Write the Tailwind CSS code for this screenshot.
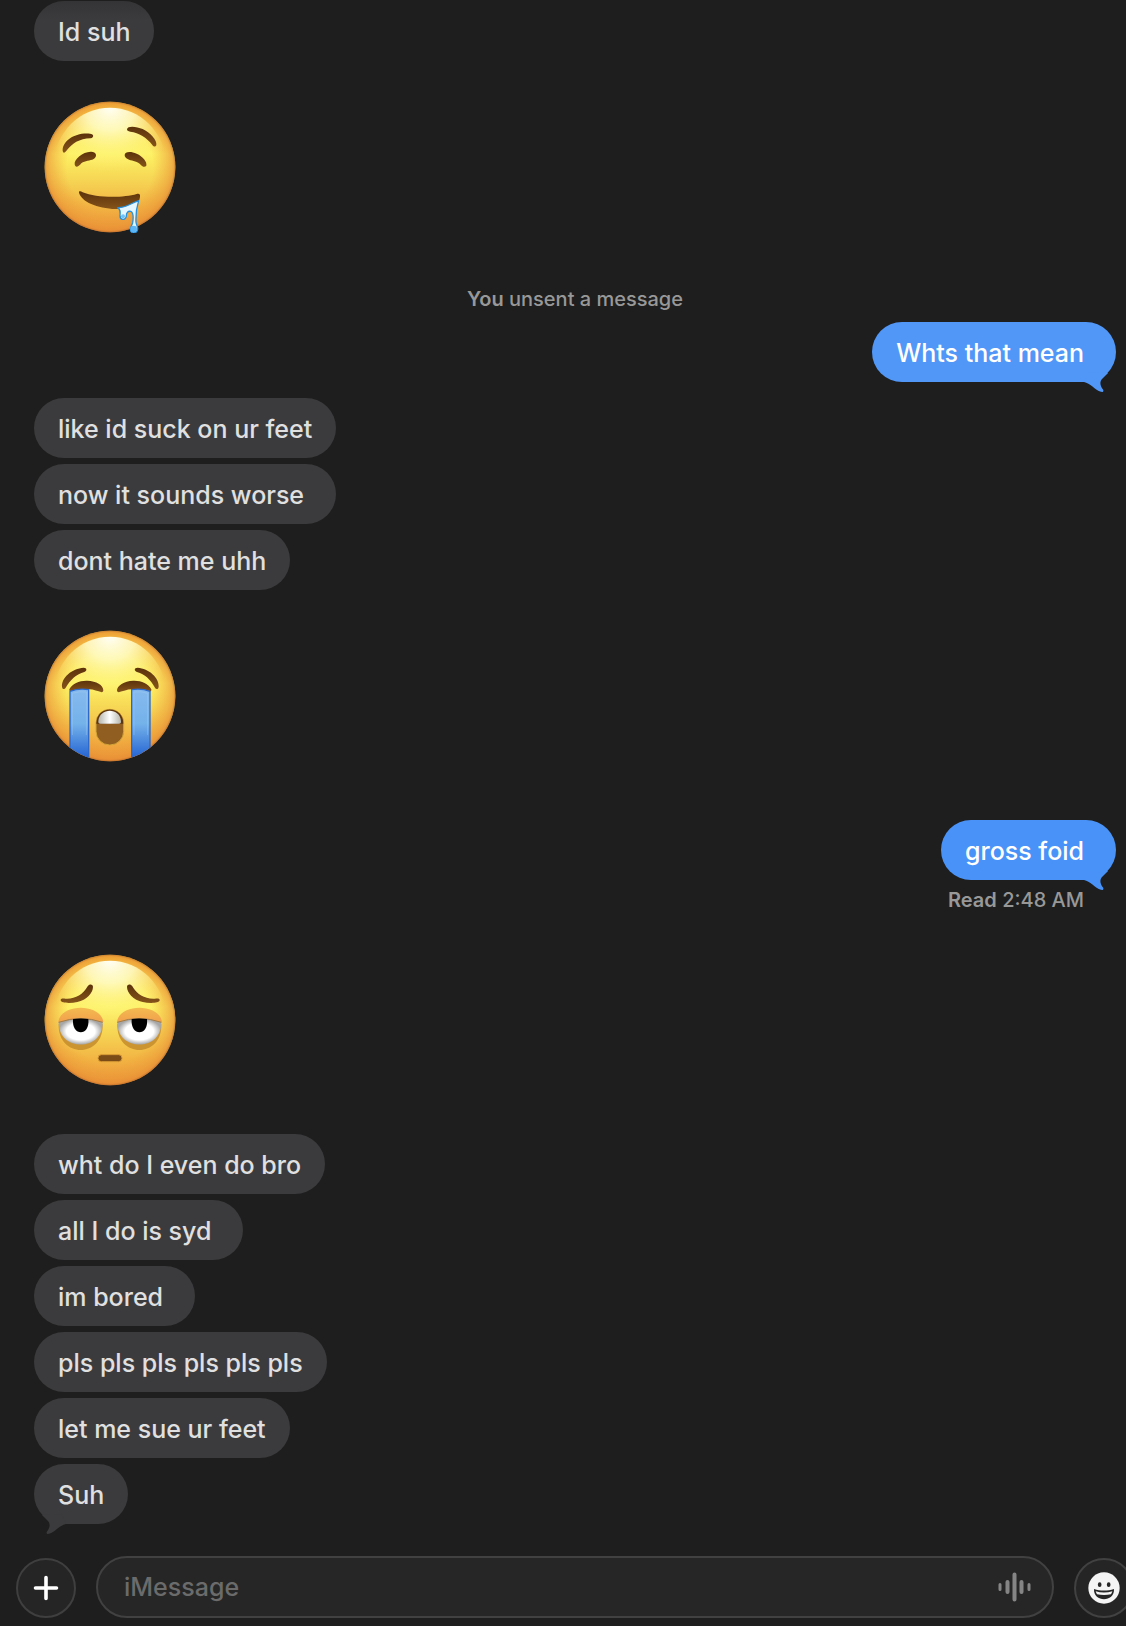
<!DOCTYPE html>
<html lang="en">

<head>
    <meta charset="UTF-8">
    <meta name="viewport" content="width=device-width, initial-scale=1.0">
    <title>Messages</title>
    <script src="https://cdn.jsdelivr.net/npm/@tailwindcss/browser@4"></script>
</head>

<body class="bg-[#1e1e1e] font-['Inter','Liberation_Sans',sans-serif] text-[25px] leading-8 font-medium text-[#e0e0e0]">
    <!-- shared shapes -->
    <svg class="absolute size-0" aria-hidden="true">
        <defs>
            <linearGradient id="skin" x1="0" y1="0" x2="0" y2="1">
                <stop offset="0" stop-color="#fcc93a"/>
                <stop offset=".2" stop-color="#fbe158"/>
                <stop offset=".4" stop-color="#fdf264"/>
                <stop offset=".6" stop-color="#f6d554"/>
                <stop offset=".8" stop-color="#f2b443"/>
                <stop offset="1" stop-color="#ec983a"/>
            </linearGradient>
            <radialGradient id="rim">
                <stop offset=".66" stop-color="#ee9a38" stop-opacity="0"/>
                <stop offset=".9" stop-color="#ea9336" stop-opacity=".5"/>
                <stop offset=".97" stop-color="#e68a34" stop-opacity=".65"/>
                <stop offset="1" stop-color="#b9682a" stop-opacity=".8"/>
            </radialGradient>
            <radialGradient id="shine" gradientUnits="userSpaceOnUse" cx="198" cy="20" r="215" gradientTransform="translate(0 2) scale(1 .9)">
                <stop offset="0" stop-color="#fffff4"/>
                <stop offset=".35" stop-color="#fffdc8" stop-opacity=".85"/>
                <stop offset=".7" stop-color="#fff88e" stop-opacity=".4"/>
                <stop offset="1" stop-color="#fff080" stop-opacity="0"/>
            </radialGradient>
            <linearGradient id="brown" x1="0" y1="0" x2="0" y2="1">
                <stop offset="0" stop-color="#5c320b"/>
                <stop offset="1" stop-color="#85531a"/>
            </linearGradient>
            <linearGradient id="tear" x1="0" y1="0" x2="0" y2="1">
                <stop offset="0" stop-color="#86baee"/>
                <stop offset=".5" stop-color="#74b2ea"/>
                <stop offset="1" stop-color="#2462d2"/>
            </linearGradient>
            <linearGradient id="teeth" x1="0" y1="0" x2="1" y2="0">
                <stop offset="0" stop-color="#b5b5ac"/>
                <stop offset=".5" stop-color="#ffffff"/>
                <stop offset="1" stop-color="#b5b5ac"/>
            </linearGradient>
            <radialGradient id="eyeball">
                <stop offset=".65" stop-color="#ffffff"/>
                <stop offset="1" stop-color="#a6a6a6"/>
            </radialGradient>
            <linearGradient id="lid" x1="0" y1="0" x2="0" y2="1">
                <stop offset="0" stop-color="#f3bb50"/>
                <stop offset="1" stop-color="#f2a04c"/>
            </linearGradient>
            <clipPath id="face-clip"><circle cx="198" cy="198" r="196"/></clipPath>
            <symbol id="face" viewBox="0 0 396 396">
                <circle cx="198" cy="198" r="196" fill="url(#skin)"/>
                <circle cx="198" cy="198" r="196" fill="url(#rim)"/>
                <path d="M198 20C108 20 34 92 28 190C60 240 336 240 368 190C362 92 288 20 198 20Z" fill="url(#shine)"/>
            </symbol>
            <symbol id="tail" viewBox="0 0 32 24">
                <path d="M0 14C6 15 11 22 17 23.8C19 24.3 20 23 19 21.5C16 18 15.5 14 18 11L24 5L4 4Z"/>
            </symbol>
        </defs>
    </svg>

    <div class="flex min-h-screen flex-col overflow-x-hidden pt-px pb-2">
        <main class="flex flex-1 flex-col items-start pr-2.5 pl-[34px]">
            <p class="rounded-[30px] bg-linear-to-b from-[#343436] to-[#3b3b3d] to-30% px-6 pt-[15px] pb-[13px]">Id suh</p>

            <svg class="mt-10 ml-2.5 size-33" viewBox="0 0 396 396" role="img" aria-label="Drooling face">
                <use href="#face"/>
                <g fill="url(#brown)">
                    <path d="M56 149C55 120 92 94 138 98C150 99 151 109 140 112C106 113 84 127 66 151C61 157 57 156 56 149Z"/>
                    <path d="M249 85C250 73 278 76 296 84C318 94 340 117 337 133C334 139 329 137 325 132C308 109 285 95 259 92C252 91 249 89 249 85Z"/>
                    <path d="M92 190C90 174 116 153 140 152C156 151 162 165 149 174C138 180 124 178 112 187C103 198 94 202 92 190Z"/>
                    <path d="M242 162C242 152 260 150 278 158C296 166 310 182 307 194C302 201 294 196 287 188C276 179 262 180 251 174C245 171 242 167 242 162Z"/>
                    <path d="M105 275C104 270 110 270 116 274C156 291 238 291 278 279C286 277 289 280 288 288C287 308 260 324 216 324C158 322 113 302 105 275Z"/>
                </g>
                <path d="M284 299C262 306 245 321 221 320C229 325 229 331 228 343C227 358 246 359 247 345C247 334 252 330 260 331C269 334 268 352 266 365C262 377 254 387 263 394C271 399 282 393 281 382C281 377 277 371 276 363C275 338 278 318 284 299Z" fill="#e4f6ff" stroke="#2690dc" stroke-width="4" stroke-linejoin="round"/>
                <circle cx="269" cy="384" r="10" fill="#5cb5f4"/>
                <circle cx="237" cy="346" r="6" fill="#71c2f5"/>
            </svg>

            <p class="mt-[54px] self-center text-xl leading-6 text-[#989898]"><span class="font-semibold">You</span> unsent a message</p>

            <div class="relative mt-[11px] self-end rounded-[30px] bg-[#5097f8] pt-[15px] pr-8 pb-[13px] pl-6 text-white">
                <p>Whts that mean</p>
                <svg class="absolute right-0 -bottom-2.5 h-6 w-8 fill-[#5097f8]" aria-hidden="true"><use href="#tail"/></svg>
            </div>

            <div class="mt-4 flex flex-col items-start gap-1.5">
                <p class="rounded-[30px] bg-[#3b3b3d] px-6 pt-[15px] pb-[13px]">like id suck on ur feet</p>
                <p class="rounded-[30px] bg-[#3b3b3d] pt-[15px] pr-8 pb-[13px] pl-6">now it sounds worse</p>
                <p class="rounded-[30px] bg-[#3b3b3d] px-6 pt-[15px] pb-[13px]">dont hate me uhh</p>
            </div>

            <svg class="mt-10 ml-2.5 size-33" viewBox="0 0 396 396" role="img" aria-label="Loudly crying face">
                <use href="#face"/>
                <g fill="url(#brown)">
                    <path d="M54 170C52 143 84 115 119 113C129 113 130 122 121 126C97 132 80 149 65 173C60 180 55 178 54 170Z"/>
                    <path d="M344 170C346 143 314 115 281 113C270 113 270 122 279 126C303 132 319 149 333 173C338 180 343 178 344 170Z"/>
                    <path d="M76 178C84 160 108 151 130 152C157 153 178 165 178 181C177 189 171 187 164 184C142 175 114 174 90 183C81 187 75 185 76 178Z"/>
                    <path d="M322 178C314 160 290 151 268 152C240 153 219 167 219 181C220 189 226 187 234 184C257 175 284 174 308 183C317 187 323 185 322 178Z"/>
                </g>
                <g clip-path="url(#face-clip)" fill="url(#tear)" stroke="#2a69cf" stroke-width="4">
                    <path d="M78 184Q104 174 134 179V385H78Z"/>
                    <path d="M263 179Q292 174 318 184V385H263Z"/>
                </g>
                <g fill="none" stroke="#a6cdf3" stroke-width="2" opacity=".6">
                    <path d="M85 315V190Q105 183 127 186V315"/>
                    <path d="M270 315V186Q292 183 311 190V315"/>
                </g>
                <rect x="156" y="238" width="83" height="107" rx="41" fill="#8f5e20" stroke="#d3a53a" stroke-width="3"/>
                <path d="M157 281C157 224 238 224 238 281Z" fill="#5c350d"/>
                <path d="M163 274C166 232 229 232 231 274Q232 281 225 281H169Q162 281 163 274Z" fill="url(#teeth)"/>
            </svg>

            <div class="relative mt-[58px] self-end rounded-[30px] bg-[#4993f8] pt-[15px] pr-8 pb-[13px] pl-6 text-white">
                <p>gross foid</p>
                <svg class="absolute right-0 -bottom-2.5 h-6 w-8 fill-[#4993f8]" aria-hidden="true"><use href="#tail"/></svg>
            </div>
            <p class="mt-2 mr-8 self-end text-xl leading-6 text-[#989898]"><span class="font-semibold">Read</span> 2:48 AM</p>

            <svg class="mt-[42px] ml-2.5 size-33" viewBox="0 0 396 396" role="img" aria-label="Tired face with heavy eyelids">
                <use href="#face"/>
                <g fill="url(#brown)">
                    <path d="M50 139C49 133 56 133 64 134C92 136 117 123 131 97C136 89 146 90 147 98C147 117 128 138 100 144C79 149 52 148 50 139Z"/>
                    <path d="M347 139C348 133 341 133 333 134C305 136 279 123 265 97C260 89 250 90 249 98C249 117 268 138 296 144C317 149 345 148 347 139Z"/>
                </g>
                <g id="sleepy-eye">
                    <path d="M44 210C40 314 180 314 176 210Z" fill="#c48c2c" opacity=".85"/>
                    <path d="M43 204C50 147 170 147 178 204Z" fill="url(#lid)"/>
                    <path d="M44 204Q110 182 176 204C178 294 42 294 44 204Z" fill="url(#eyeball)"/>
                    <path d="M44 205Q110 182 176 205" fill="none" stroke="#a77a3d" stroke-width="3"/>
                    <path d="M87 195Q110 192 133 195C139 248 82 248 87 195Z" fill="#000"/>
                </g>
                <use href="#sleepy-eye" x="176"/>
                <rect x="162" y="302" width="72" height="21" rx="10" fill="#7a4a17" stroke="#d89b36" stroke-width="3"/>
            </svg>

            <div class="mt-12 flex flex-col items-start gap-1.5">
                <p class="rounded-[30px] bg-[#3b3b3d] px-6 pt-[15px] pb-[13px]">wht do I even do bro</p>
                <p class="rounded-[30px] bg-[#3b3b3d] pt-[15px] pr-8 pb-[13px] pl-6">all I do is syd</p>
                <p class="rounded-[30px] bg-[#3b3b3d] pt-[15px] pr-8 pb-[13px] pl-6">im bored</p>
                <p class="rounded-[30px] bg-[#3b3b3d] px-6 pt-[15px] pb-[13px]">pls pls pls pls pls pls</p>
                <p class="rounded-[30px] bg-[#3b3b3d] px-6 pt-[15px] pb-[13px]">let me sue ur feet</p>
                <div class="relative rounded-[30px] bg-[#3b3b3d] px-6 pt-[15px] pb-[13px]">
                    <p>Suh</p>
                    <svg class="absolute -bottom-2.5 left-0 h-6 w-8 -scale-x-100 fill-[#3b3b3d]" aria-hidden="true"><use href="#tail"/></svg>
                </div>
            </div>
        </main>

        <!-- composer -->
        <form class="mt-8 -mr-2 flex items-end gap-5 pl-4">
            <button type="button" aria-label="Add attachment" class="flex size-15 shrink-0 items-center justify-center rounded-full border-2 border-[#3f3f3f] bg-[#252525]">
                <svg class="size-7" viewBox="0 0 28 28" fill="none" stroke="#fff" stroke-width="3.6" stroke-linecap="round">
                    <path d="M14 3.5V24.5M3.5 14H24.5"/>
                </svg>
            </button>
            <div class="flex h-[62px] min-w-0 flex-1 items-center rounded-full border-2 border-[#414141] bg-[#262626] pr-5 pl-[26px]">
                <input type="text" aria-label="iMessage" placeholder="iMessage" class="min-w-0 flex-1 bg-transparent outline-none placeholder:text-[#6b6b6b]">
                <button type="button" aria-label="Record audio">
                    <svg class="h-8 w-9" viewBox="0 0 36 32" fill="none" stroke="#858585" stroke-linecap="round">
                        <path d="M4 13.5V18.5M33 13.5V18.5" stroke-width="3"/>
                        <path d="M11.5 11V21M18.5 3.5V28.5M25.5 11V21" stroke-width="4"/>
                    </svg>
                </button>
            </div>
            <button type="button" aria-label="Emoji picker" class="flex size-15 shrink-0 items-center justify-center rounded-full border-2 border-[#414141] bg-[#252525]">
                <svg class="size-8" viewBox="0 0 96 96">
                    <circle cx="48" cy="48" r="47" fill="#f4f4f4"/>
                    <g fill="#252525">
                        <ellipse cx="35" cy="38" rx="5.5" ry="7"/>
                        <ellipse cx="62" cy="38" rx="5.5" ry="7"/>
                        <path d="M18 51C37 57 59 57 78 51C80 92 16 92 18 51Z"/>
                    </g>
                    <path d="M23 58C39 63 57 63 73 58C72 61 71 64 69 67C56 70 40 70 27 67C25 64 24 61 23 58Z" fill="#f4f4f4"/>
                </svg>
            </button>
        </form>
    </div>
</body>

</html>
